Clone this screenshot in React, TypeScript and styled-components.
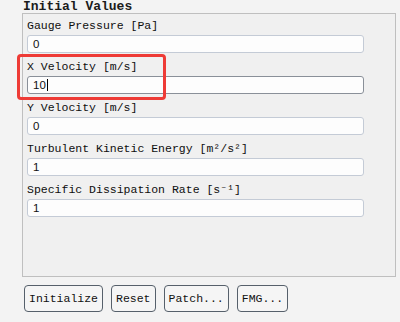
import React from "react";
import styled, { createGlobalStyle } from "styled-components";

const Global = createGlobalStyle`
  html, body { margin: 0; padding: 0; }
  body {
    background: #f3f3f3;
    width: 400px;
    height: 322px;
    overflow: hidden;
    font-family: "Liberation Mono", "DejaVu Sans Mono", monospace;
    color: #111;
  }
`;

const Page = styled.div`
  padding-left: 22px;
  width: 374px;
`;

const Title = styled.div`
  height: 13px;
  padding-left: 1px;
  font-size: 13px;
  line-height: 15px;
  font-weight: bold;
  color: #1b1b1b;
  white-space: nowrap;
  overflow: visible;
  position: relative;
  top: -1px;
`;

const Group = styled.div`
  position: relative;
  box-sizing: border-box;
  height: 264px;
  border: 1px solid #bfbfbf;
  background: #f0f0f0;
  padding: 0 31px 0 4px;
`;

const Field = styled.div`
  display: flex;
  flex-direction: column;
  margin-bottom: 2px;
`;

const Label = styled.div`
  height: 21px;
  box-sizing: border-box;
  padding-top: 5px;
  font-size: 11.5px;
  line-height: 14px;
  white-space: nowrap;
  color: #0e0e0e;
`;

const Box = styled.div<{ $focused?: boolean }>`
  box-sizing: border-box;
  height: 18px;
  border: 1px solid ${(p) => (p.$focused ? "#8a9099" : "#c4cbd6")};
  border-radius: 3px;
  background: #fdfdfd;
  padding-left: 5px;
  display: flex;
  align-items: center;
  font-family: "Liberation Sans", Arial, sans-serif;
  font-size: 11.5px;
  color: #111;
`;

const Caret = styled.span`
  display: inline-block;
  width: 1px;
  height: 12px;
  background: #000;
  margin-left: 1px;
`;

const Highlight = styled.div`
  position: absolute;
  left: -6px;
  top: 40px;
  width: 149px;
  height: 46px;
  box-sizing: border-box;
  border: 3px solid #ee3b36;
  border-radius: 4px;
  pointer-events: none;
`;

const Buttons = styled.div`
  display: flex;
  gap: 8px;
  margin-top: 8px;
  margin-left: 2px;
`;

const Button = styled.button`
  box-sizing: border-box;
  height: 27px;
  padding: 0 4px;
  border: 1px solid #56606b;
  border-radius: 4px;
  background: #f5f5f5;
  font-family: "Liberation Mono", "DejaVu Sans Mono", monospace;
  font-size: 11.5px;
  color: #111;
`;

const fields: { label: React.ReactNode; value: string; focused?: boolean }[] = [
  { label: "Gauge Pressure [Pa]", value: "0" },
  { label: "X Velocity [m/s]", value: "10", focused: true },
  { label: "Y Velocity [m/s]", value: "0" },
  { label: "Turbulent Kinetic Energy [m²/s²]", value: "1" },
  { label: "Specific Dissipation Rate [s⁻¹]", value: "1" },
];

export default function App() {
  return (
    <>
      <Global />
      <Page>
        <Title>Initial Values</Title>
        <Group>
          {fields.map((f, i) => (
            <Field key={i}>
              <Label>{f.label}</Label>
              <Box $focused={f.focused}>
                {f.value}
                {f.focused && <Caret />}
              </Box>
            </Field>
          ))}
          <Highlight />
        </Group>
        <Buttons>
          <Button>Initialize</Button>
          <Button>Reset</Button>
          <Button>Patch...</Button>
          <Button>FMG...</Button>
        </Buttons>
      </Page>
    </>
  );
}
